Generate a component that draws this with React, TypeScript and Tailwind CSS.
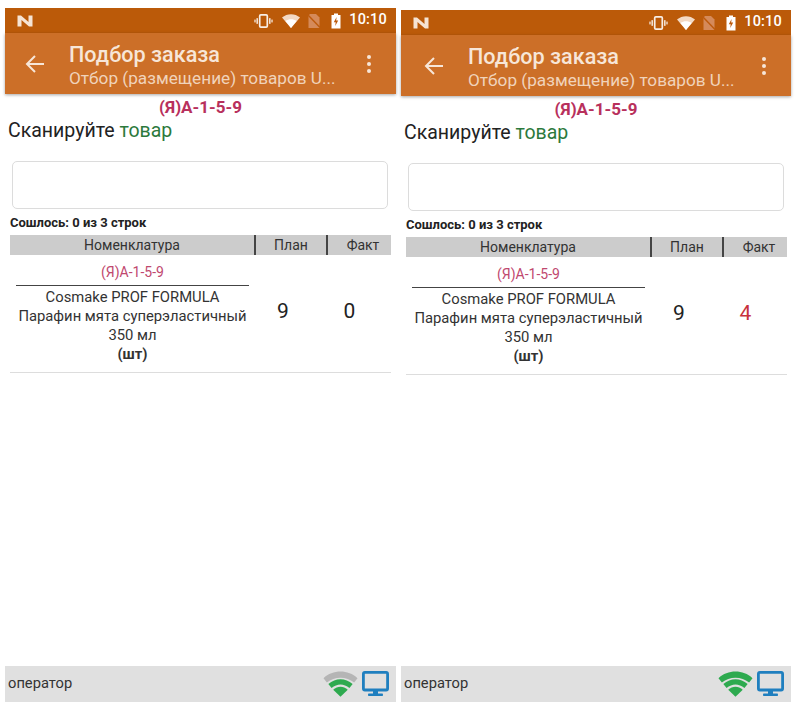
const font = { fontFamily: "Roboto, sans-serif" };

function StatusIcons() {
  return (
    <div className="flex items-center text-white">
      {/* vibrate */}
      <svg width="19" height="16" viewBox="0 0 20 16" className="opacity-90">
        <rect x="6" y="1.5" width="8" height="13" rx="1.2" fill="none" stroke="#fff" strokeWidth="1.8" />
        <rect x="2.6" y="5" width="1.5" height="6" fill="#fff" />
        <rect x="0.4" y="6.5" width="1.3" height="3" fill="#fff" />
        <rect x="15.9" y="5" width="1.5" height="6" fill="#fff" />
        <rect x="18.3" y="6.5" width="1.3" height="3" fill="#fff" />
      </svg>
      {/* wifi */}
      <svg width="18" height="14" viewBox="0 0 18 14" className="ml-[9px]">
        <path d="M0 3.6 C5 -0.9 13 -0.9 18 3.6 L9 14 Z" fill="#f3d9c4" />
        <path d="M3.4 7 C6.6 4.5 11.4 4.5 14.6 7 L9 14 Z" fill="#fff" />
      </svg>
      {/* no sim */}
      <svg width="14" height="16" viewBox="0 0 14 16" className="ml-[7px]">
        <path d="M3 1 H9 L12.5 4.5 V15 H1.5 V2.5 Z" fill="#d58a5a" />
        <path d="M0.5 1.5 L13 14.5" stroke="#bd5a0c" strokeWidth="1.4" />
      </svg>
      {/* charging battery */}
      <svg width="10" height="16" viewBox="0 0 10 16" className="ml-[10px]">
        <path d="M3 0.5 H7 V2 H9.5 V15.5 H0.5 V2 H3 Z" fill="#fff" />
        <path d="M5.6 4 L2.8 9.2 H4.7 L4.2 13 L7.2 7.6 H5.2 Z" fill="#bd5a0c" />
      </svg>
      <span className="ml-[8px] text-[14.5px] font-medium leading-none tracking-[0.2px]">10:10</span>
    </div>
  );
}

function WifiSignal({ full }: { full: boolean }) {
  const outer = full ? "#2eaa4f" : "#b5b5b5";
  return (
    <svg width="35" height="26" viewBox="0 0 36 26">
      <path d="M0.5 7 C10 -2 26 -2 35.5 7 L32 11.5 C24 4.8 12 4.8 4 11.5 Z" fill={outer} />
      <path d="M5.5 13 C13 6.6 23 6.6 30.5 13 L27.2 17.2 C21.5 12.4 14.5 12.4 8.8 17.2 Z" fill="#2eaa4f" />
      <path d="M10.5 19 C15 14.6 21 14.6 25.5 19 L18 26 Z" fill="#2eaa4f" />
    </svg>
  );
}

function Monitor() {
  return (
    <svg width="27" height="26" viewBox="0 0 27 26">
      <rect x="1.4" y="1.4" width="24.2" height="17.6" rx="1.5" fill="none" stroke="#1f7fbf" strokeWidth="2.8" />
      <rect x="11" y="19" width="5" height="4" fill="#1f7fbf" />
      <rect x="6" y="22.5" width="15" height="2.6" rx="0.8" fill="#1f7fbf" />
    </svg>
  );
}

function ScanPanel({
  fact,
  factRed,
  fullWifi,
  width,
  topPad,
  barPad,
}: {
  fact: string;
  factRed: boolean;
  fullWifi: boolean;
  width: string;
  topPad: string;
  barPad: string;
}) {
  return (
    <div className={`flex h-full flex-col ${width} ${topPad}`}>
      <div className="flex h-[25px] items-center justify-between bg-[#bb5a09] pl-[12px] pr-[9px]">
        <svg width="16" height="12" viewBox="0 0 16 12">
          <path d="M0.5 0.5 H4 L11.5 7 V0.5 H15.5 V11.5 H12 L4.5 5 V11.5 H0.5 Z" fill="#f6e4d4" />
        </svg>
        <StatusIcons />
      </div>

      <div className={`relative z-10 flex h-[61px] items-center bg-[#cc6f28] shadow-[0_1px_3px_rgba(0,0,0,0.35)] ${barPad}`}>
        <svg width="20" height="20" viewBox="0 0 20 20" className="ml-[20px]">
          <path d="M19 10 H2.5 M10 2 L2 10 L10 18" fill="none" stroke="#f7e6d8" strokeWidth="2" />
        </svg>
        <div className="ml-[24px] min-w-0 flex-1 whitespace-nowrap">
          <div className="pt-[2px] text-[21.6px] font-medium leading-[27px] text-[#f7e6d8]">Подбор заказа</div>
          <div className="text-[17.2px] leading-[21px] text-[#f0d3bb]">Отбор (размещение) товаров U...</div>
        </div>
        <div className="mr-[25px] flex flex-col gap-[3px]">
          <span className="h-[4px] w-[4px] rounded-full bg-[#f7e6d8]" />
          <span className="h-[4px] w-[4px] rounded-full bg-[#f7e6d8]" />
          <span className="h-[4px] w-[4px] rounded-full bg-[#f7e6d8]" />
        </div>
      </div>

      <div className="flex-1 bg-white">
        <div className="mt-[3px] text-center text-[17px] font-bold leading-[20px] text-[#b8305c]">(Я)А-1-5-9</div>
        <div className="mt-[2px] pl-[3px] text-[19.5px] leading-[24px] text-[#222]">
          Сканируйте <span className="text-[#2c7a3c]">товар</span>
        </div>
        <div className="ml-[7px] mt-[18px] h-[48px] w-[376px] rounded-[5px] border border-[#dcdcdc] bg-white" />
        <div className="mt-[7px] pl-[5px] text-[13px] font-bold leading-[14px] text-[#222]">Сошлось: 0 из 3 строк</div>

        <div className="ml-[5px] mt-[5px] flex h-[20px] w-[381px] items-center bg-[#cccccc] text-[14px] text-[#333]">
          <div className="w-[244px] text-center leading-[20px]">Номенклатура</div>
          <div className="h-full w-[72px] border-l-2 border-[#444] text-center leading-[20px]">План</div>
          <div className="h-full flex-1 border-l-2 border-[#444] pl-[7px] text-center leading-[20px]">Факт</div>
        </div>

        <div className="ml-[5px] flex h-[118px] w-[381px] items-center border-b border-[#dddddd]">
          <div className="w-[244px] pl-[6px] pr-[5px] text-center text-[14.8px] leading-[19px] text-[#333]">
            <div className="border-b border-[#444] pb-[3px] text-[14px] text-[#c0486f]">(Я)А-1-5-9</div>
            <div className="mt-[2px]">Cosmake PROF FORMULA</div>
            <div className="whitespace-nowrap">Парафин мята суперэластичный</div>
            <div>350 мл</div>
            <div className="font-bold">(шт)</div>
          </div>
          <div className="w-[72px] pb-[4px] pr-[14px] text-center text-[21px] text-[#222]">9</div>
          <div className={`flex-1 pb-[4px] pr-[18px] text-center text-[21px] ${factRed ? "text-[#c8323c]" : "text-[#222]"}`}>
            {fact}
          </div>
        </div>
      </div>

      <div className="flex h-[36px] items-center justify-between bg-[#e0e0e0] pl-[3px] pr-[7px]">
        <span className="pb-[1px] text-[14.7px] text-[#333]">оператор</span>
        <div className="flex items-center gap-[4px]">
          <WifiSignal full={fullWifi} />
          <Monitor />
        </div>
      </div>
    </div>
  );
}

export default function App() {
  return (
    <div style={font} className="flex h-[706px] w-[802px] gap-[5px] overflow-hidden bg-white pb-[4px] pl-[5px]">
      <ScanPanel fact="0" factRed={false} fullWifi={false} width="w-[391px]" topPad="pt-[8px]" barPad="" />
      <ScanPanel fact="4" factRed={true} fullWifi={true} width="w-[390px]" topPad="pt-[10px]" barPad="pl-[3px]" />
    </div>
  );
}
